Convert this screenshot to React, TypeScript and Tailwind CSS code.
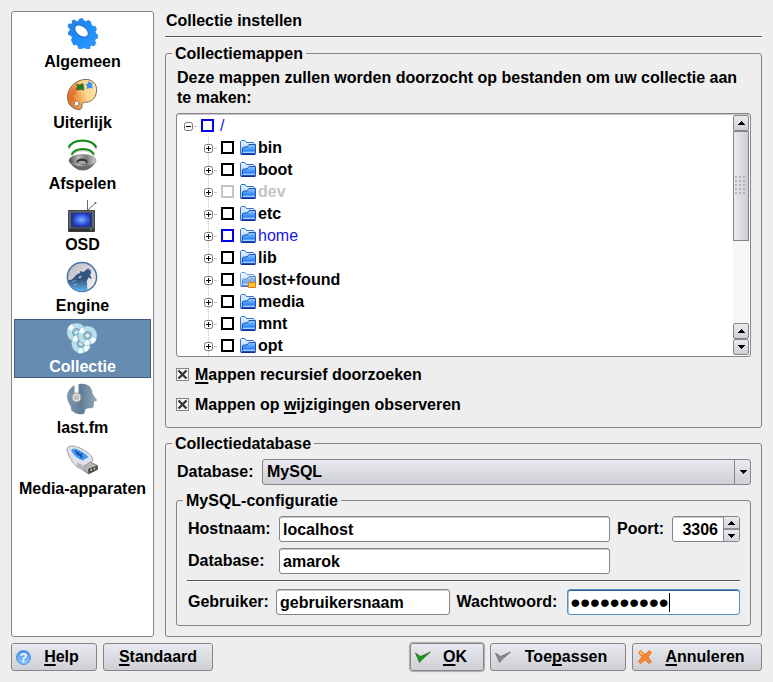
import type { ReactNode } from "react";

function GearIcon() {
  return (
    <svg viewBox="0 0 32 32" className="size-8" aria-hidden="true">
      <defs>
        <linearGradient id="gear" x1="0" y1="0" x2="1" y2="1">
          <stop offset="0" stopColor="#2a7be0" />
          <stop offset=".4" stopColor="#1b8bfb" />
          <stop offset="1" stopColor="#2f9dff" />
        </linearGradient>
      </defs>
      <path
        fill="url(#gear)"
        stroke="#2a7fdc"
        strokeWidth=".7"
        strokeLinejoin="round"
        d="M6 3.500 8.500 3l2 1.500 2-.3L13.500 2l3-.5 1.300 2.200 2.200 1 2-1.400 2.700 1.500.3 2.700 1.800 1.700 2.500.2 1.200 3-1.300 2 .5 2.200 2 1.300-.2 3.300-2.300.8-.4 2 1.200 2.200-2 2.700-2.500-.7-1.500 1 0 2.300-3 1-1.900-1.700-2.200 0-1.500 1.500-3-1-.4-2.500-1.800-1.300-2.500.6L5.300 23l1-2.200-1-2.200L2.700 18l-.5-3L4 13.700l.1-2L2 10l.8-3 2.700 0 1-1.200z"
      />
      <ellipse cx="15.500" cy="14" rx="7.800" ry="5" transform="rotate(38 15.500 14)" fill="#fff" stroke="#1f6fc8" strokeWidth="1.200" />
    </svg>
  );
}

function PaletteIcon() {
  return (
    <svg viewBox="0 0 32 32" className="size-8" aria-hidden="true">
      <defs>
        <linearGradient id="palette" x1="0" y1=".6" x2="1" y2=".3">
          <stop offset="0" stopColor="#e5702a" />
          <stop offset=".35" stopColor="#f3a352" />
          <stop offset=".6" stopColor="#fbd58a" />
          <stop offset="1" stopColor="#fde7a8" />
        </linearGradient>
      </defs>
      <path
        fill="url(#palette)"
        stroke="#7a6250"
        d="M19 1.500c6-.5 11 3 11.500 9 .4 6-2 11-7 13-3.500 1.300-7 .5-7.500 2.500-.3 1.500.5 4.500-2 5.300-2.500.7-7-.6-10-4.300C.8 23 .8 16 4 10.500 7.500 5 12.500 2 19 1.500z"
      />
      <path fill="#e2682a" opacity=".6" d="M3 21c-.5-5 2-11 7-13l2 3-2 3 1 2-4 2 2 3-4 4z" />
      <ellipse cx="10.500" cy="25.500" rx="2.200" ry="2.700" fill="#fff" stroke="#7a6250" strokeWidth=".8" transform="rotate(25 10.500 25.500)" />
      <path fill="#168018" stroke="#44543a" strokeWidth=".6" d="m10.500 6 3 1L17 5.500l.5 3 .5 3.500-3-.5-4.500.5 1-3z" />
      <path fill="#3f8ff5" d="m19.500 6 2 0L22.500 3l2 1.500 2 .5-.5 3 1 2.500-3-.5-3.500 1 .5-3z" />
    </svg>
  );
}

function SpeakerIcon() {
  return (
    <svg viewBox="0 0 32 32" className="size-8" aria-hidden="true">
      <defs>
        <linearGradient id="cone">
          <stop offset="0" stopColor="#4a4a4a" />
          <stop offset=".35" stopColor="#bbb" />
          <stop offset=".65" stopColor="#777" />
          <stop offset="1" stopColor="#d5d5d5" />
        </linearGradient>
      </defs>
      <path d="M2.500 10.500C7-1 26-1 30.500 10.500" fill="none" stroke="#c4c4c4" strokeWidth="1.500" />
      <path d="M2.500 8.500C7-1 26-1 30.500 8.500" fill="none" stroke="#138c16" strokeWidth="2" />
      <path d="M5.500 17c4-7.500 19-7.500 22.500 0" fill="none" stroke="#c4c4c4" strokeWidth="1.500" />
      <path d="M5.500 15.500c4-7.500 19-7.500 22.500 0" fill="none" stroke="#138c16" strokeWidth="2" />
      <path d="M3.500 22c1 4 4.500 6 6.500 7.500 2.500 2.500 11 2.500 13.500 0 2-1.500 5-3.500 6-7.500z" fill="#666" />
      <ellipse cx="16.500" cy="21.500" rx="13.500" ry="6" fill="url(#cone)" stroke="#777" strokeWidth=".6" />
      <ellipse cx="16" cy="22.500" rx="5.500" ry="3" fill="#333" />
      <ellipse cx="16" cy="23.500" rx="4" ry="1.800" fill="#a5a5a5" />
    </svg>
  );
}

function TvIcon() {
  return (
    <svg viewBox="0 0 32 32" className="size-8" aria-hidden="true">
      <defs>
        <radialGradient id="screen">
          <stop offset="0" stopColor="#86aeff" />
          <stop offset=".6" stopColor="#3a63e4" />
          <stop offset="1" stopColor="#2138ac" />
        </radialGradient>
      </defs>
      <path d="M21.500 10V0M22 10l7.500-7" stroke="#666" fill="none" />
      <circle cx="29.500" cy="3" r="1" fill="#666" />
      <path d="M2.500 10.500h26v21h-26z" fill="#666663" stroke="#444" />
      <path d="M3 28.500h25v3H3z" fill="#303030" />
      <path d="M5 12.500h21v15H5z" fill="#25307a" />
      <path d="M6 13h19l-1 7 1 6.500H6l1-6.500z" fill="url(#screen)" />
      <path d="M24 29.500h2" stroke="#21b038" strokeWidth="1.500" />
    </svg>
  );
}

function WolfIcon() {
  return (
    <svg viewBox="0 0 32 32" className="size-8" aria-hidden="true">
      <defs>
        <linearGradient id="sky" x1="0" y1="0" x2="1" y2="1">
          <stop offset="0" stopColor="#b6b6bf" />
          <stop offset="1" stopColor="#f8f8fa" />
        </linearGradient>
        <linearGradient id="wolf" x1="0" y1="0" x2="0" y2="1">
          <stop offset=".5" stopColor="#34557f" />
          <stop offset="1" stopColor="#60b4f0" />
        </linearGradient>
      </defs>
      <circle cx="16" cy="16" r="14.600" fill="url(#sky)" stroke="#4a72a4" strokeWidth="1.500" />
      <path
        fill="url(#wolf)"
        d="M2 19.500c3-.5 4-1 5.500-2.500 2-2.500 3.500-4.500 6.500-5l.5-2 3 1L22.500 7l.5 2.500L24.500 8l.5 4-1 2 2 4-3.500-1.500-1.500 3c-1 2 1 3 0 5l.5 4.500A14 14 0 0 1 2 19.500z"
      />
      <path d="m12.500 16 3-1-1.500 2.500z" fill="#fff" />
      <path d="m6 21 4-2M8 24l3-1" stroke="#9fc0e0" strokeWidth=".7" />
    </svg>
  );
}

function Disc({ cx, cy }: { cx: number; cy: number }) {
  return (
    <g>
      <circle cx={cx} cy={cy} r="9.800" fill="#b8dfec" stroke="#69909e" strokeWidth=".7" />
      <path d={`M${cx} ${cy}l-9-3.500a9.700 9.700 0 0 1 4-5zM${cx} ${cy}l9 3.500a9.700 9.700 0 0 1-4 5zM${cx} ${cy}l2 9.400a9.700 9.700 0 0 1-5 0z`} fill="#f4fdff" />
      <circle cx={cx} cy={cy} r="4" fill="#96c0cf" stroke="#6891a1" strokeWidth=".8" />
      <circle cx={cx} cy={cy} r="1.800" fill="#dff3fa" />
    </g>
  );
}

function DiscsIcon() {
  return (
    <svg viewBox="0 0 32 32" className="size-8" aria-hidden="true">
      <Disc cx={10.500} cy={10.500} />
      <Disc cx={15} cy={21.500} />
      <Disc cx={21.500} cy={13.500} />
    </svg>
  );
}

function HeadIcon() {
  return (
    <svg viewBox="0 0 32 32" className="size-8" aria-hidden="true">
      <defs>
        <linearGradient id="head">
          <stop offset="0" stopColor="#8399ad" />
          <stop offset=".45" stopColor="#5f7d97" />
          <stop offset="1" stopColor="#94a8b8" />
        </linearGradient>
      </defs>
      <path fill="url(#head)" d="M13 1c8-1.500 13 2.500 13.500 9 0 2 4.500 6 4.500 7.200 0 1-3 .8-3 1.800 0 3 0 5.500-2 6-2.500.5-5-.5-6.500 1.500-.7 1-.5 3-1.500 4.500-5 1-9.500-.5-13-4 1-4-3.500-7-4-13C1.200 7 6 2.200 13 1z" />
      <path d="M10.500 1v12" stroke="#fff" strokeWidth="4" />
      <circle cx="10.500" cy="14.500" r="4.500" fill="#e4e4e4" stroke="#9a9a9a" strokeWidth="1.200" />
      <circle cx="10.500" cy="14.500" r="2.300" fill="#c4c4c4" stroke="#aaa" strokeWidth=".7" />
    </svg>
  );
}

function UsbIcon() {
  return (
    <svg viewBox="0 0 32 32" className="size-8" aria-hidden="true">
      <path d="m17 20 5-3 9.500 4.500v4L22.500 30 17 26z" fill="#b5b5ad" stroke="#5e5e5e" strokeWidth=".7" />
      <path d="m22 25 9.500-3.500v4L22.500 30z" fill="#4a4a47" />
      <path d="m24.500 25.500 1.500-.7v1.500l-1.500.7zM27.700 24.200l1.500-.7V25l-1.500.7z" fill="#eee" />
      <path d="M1 5c.5-3 5-3.500 8.500-2.500 6 1.500 12 5.500 16 9.500l1.500 4.500-9 5.500v4.500L11 23C6 18 2 12 1 5z" fill="#e2e2ea" stroke="#8a8a95" strokeWidth=".8" />
      <path d="m11 18.500 7 3v5L11 23z" fill="#b8b8c2" />
      <path d="M5 6c2-2 5-1.500 8.500.5 4 2 7.500 4.500 9 6.500L17 16.500C12 15 7 11 5 6z" fill="#3f9bf8" />
      <path d="m9 6.500 7.500 7M10 9.500l6.500 1M13 7.500l-1 4.500M16 9.500l-1.500 4.500" stroke="#164a9c" strokeWidth="1.100" />
    </svg>
  );
}

function FolderIcon({ locked = false }: { locked?: boolean }) {
  return (
    <svg viewBox="0 0 16 16" className="size-4 shrink-0" aria-hidden="true">
      <defs>
        <linearGradient id="folderBack" x1="0" y1="0" x2="0" y2="1">
          <stop offset="0" stopColor="#e8f4ff" />
          <stop offset="1" stopColor="#9fcaf8" />
        </linearGradient>
        <linearGradient id="folderFront" x1="0" y1="0" x2="0" y2="1">
          <stop offset="0" stopColor="#9ccdff" />
          <stop offset=".35" stopColor="#5aa6fb" />
          <stop offset=".7" stopColor="#2f83f5" />
          <stop offset="1" stopColor="#e2f4ff" />
        </linearGradient>
      </defs>
      <g opacity={locked ? 0.7 : 1}>
        <path d="M.5 14V1.500l1-1H5l1.500 2h7l1 1V14z" fill="url(#folderBack)" stroke="#2f6fd6" />
        <path d="M2.500 13.500V8l1-1H7l2-2.500h6.500v9z" fill="url(#folderFront)" stroke="#1c50b8" />
        <path d="M1 14.500h14.500" stroke="#0f2f92" />
      </g>
      {locked && (
        <g>
          <path d="M10 11V8.500a2 2 0 0 1 4 0V11" fill="none" stroke="#999" strokeWidth="1.200" />
          <path d="M8.500 10.500h7v5h-7z" fill="#fbc23c" stroke="#e07b14" />
        </g>
      )}
    </svg>
  );
}

function Expander({ open = false }: { open?: boolean }) {
  return (
    <svg viewBox="0 0 9 9" className="size-[9px]" aria-hidden="true">
      <rect x=".5" y=".5" width="8" height="8" rx="2" fill="#fff" stroke="#777" />
      <path d={open ? "M2 4.500h5" : "M2 4.500h5M4.500 2v5"} stroke="#000" />
    </svg>
  );
}

function Arrow({ down = false }: { down?: boolean }) {
  return (
    <svg viewBox="0 0 7 4" className="h-1 w-[7px]" shapeRendering="crispEdges" aria-hidden="true">
      <path d={down ? "M0 0h7v1H6v1H5v1H4v1H3V3H2V2H1V1H0z" : "M0 4h7V3H6V2H5V1H4V0H3v1H2v1H1v1H0z"} />
    </svg>
  );
}

function TickIcon({ gray = false }: { gray?: boolean }) {
  return (
    <svg viewBox="0 0 16 16" className="size-4" aria-hidden="true">
      <path d="M.5 4 5.500 7.500 15.500 3 7 10.500 4.500 13.500z" fill={gray ? "#8a8a8a" : "#0f9a17"} stroke={gray ? "#6c6c6c" : "#3c6b34"} strokeWidth=".8" />
    </svg>
  );
}

function CrossIcon() {
  return (
    <svg viewBox="0 0 16 16" className="size-4" aria-hidden="true">
      <path
        d="m3.500 1.500 4.500 4 4.500-4 2 2L11 8l3.500 4.500-2.500 2L8 11l-4.500 3.500-2-2L5 8 1.500 3.500z"
        fill="#f58634"
        stroke="#dd6a1c"
        strokeWidth=".8"
      />
      <path d="m3.500 2.500 3 3-2 .5-2-2.500z" fill="#ffd24f" />
    </svg>
  );
}

function HelpIcon() {
  return (
    <span className="flex size-[15px] items-center justify-center rounded-full border border-[#4a8ae0] bg-linear-to-b from-[#4a90ee] to-[#8accff] text-[13px] leading-none text-white" aria-hidden="true">
      ?
    </span>
  );
}

const pages = [
  { name: "Algemeen", icon: <GearIcon /> },
  { name: "Uiterlijk", icon: <PaletteIcon /> },
  { name: "Afspelen", icon: <SpeakerIcon /> },
  { name: "OSD", icon: <TvIcon /> },
  { name: "Engine", icon: <WolfIcon /> },
  { name: "Collectie", icon: <DiscsIcon />, active: true },
  { name: "last.fm", icon: <HeadIcon /> },
  { name: "Media-apparaten", icon: <UsbIcon /> },
];

const folders: { name: string; tone?: "gray" | "blue"; locked?: boolean }[] = [
  { name: "bin" },
  { name: "boot" },
  { name: "dev", tone: "gray" },
  { name: "etc" },
  { name: "home", tone: "blue" },
  { name: "lib" },
  { name: "lost+found", locked: true },
  { name: "media" },
  { name: "mnt" },
  { name: "opt" },
];

const boxTone = { black: "border-black", gray: "border-[#c4c4c4]", blue: "border-[#0000f0]" };
const textTone = { black: "text-black", gray: "text-[#c4c4c4]", blue: "font-normal text-[#1414e6]" };

function TreeRow({ name, tone = "black", locked, root }: { name: string; tone?: "black" | "gray" | "blue"; locked?: boolean; root?: boolean }) {
  return (
    <li className={root ? "flex h-[22px] items-center pb-px pl-[7px]" : "flex h-[22px] items-center bg-[repeating-linear-gradient(to_bottom,#c0c0c0_0_1px,transparent_1px_2px)] bg-[length:1px_100%] bg-[position:31px_0] bg-no-repeat pb-px pl-[27px]"}>
      <button type="button" aria-label={"Map " + name + " uitklappen"} className="mt-[2px] flex">
        <Expander open={root} />
      </button>
      <span className="mt-[2px] mr-[5px] ml-px w-[2px] border-t border-dotted border-[#c0c0c0]" />
      <label className="flex items-center">
        <input type="checkbox" disabled={tone === "gray"} className={"size-[13px] appearance-none border-2 bg-white " + boxTone[tone]} />
        {root ? <span className="w-[6px]" /> : <span className="mr-[2px] ml-[6px] flex"><FolderIcon locked={locked} /></span>}
        <span className={"pt-px " + textTone[tone]}>{name}</span>
      </label>
    </li>
  );
}

const face = "border border-[#858585] bg-linear-to-b from-[#e9e9f0] to-[#cfcfd6]";

function ScrollButton({ down, label }: { down?: boolean; label: string }) {
  return (
    <button type="button" aria-label={label} className={"flex h-4 w-full shrink-0 items-center justify-center rounded-[2px] " + face}>
      <Arrow down={down} />
    </button>
  );
}

function ScrollBar() {
  return (
    <div className="mt-px mr-px mb-px flex w-4 shrink-0 flex-col bg-[repeating-conic-gradient(#eeeeee_0_25%,#ffffff_0_50%)] bg-[length:2px_2px]">
      <ScrollButton label="Omhoog" />
      <div className="flex h-[110px] items-center justify-center border border-[#858585] bg-linear-to-r from-[#e9e9f0] to-[#cdcdd4]">
        <div className="h-5 w-3 bg-[radial-gradient(circle_at_1px_1px,#b4b4b4_0_1px,transparent_1px)] bg-[length:4px_4px]" />
      </div>
      <div className="flex-1" />
      <ScrollButton label="Omhoog" />
      <ScrollButton down label="Omlaag" />
    </div>
  );
}

function CheckOption({ children }: { children: ReactNode }) {
  return (
    <label className="flex h-5 items-center">
      <span className="relative mr-[6px] flex size-[13px]">
        <input type="checkbox" defaultChecked className="size-[13px] appearance-none border border-[#858585] bg-[#f4f4f4]" />
        <svg viewBox="0 0 13 13" className="pointer-events-none absolute inset-0 size-[13px]" aria-hidden="true">
          <path d="m2.500 2.500 8 8M10.500 2.500l-8 8" stroke="#333" strokeWidth="2.300" />
        </svg>
      </span>
      <span className="pt-[2px]">{children}</span>
    </label>
  );
}

function Group({ title, children, className = "" }: { title: string; children: ReactNode; className?: string }) {
  return (
    <fieldset className={"min-w-0 rounded-[3px] border border-[#858585] px-[10px] " + className}>
      <legend className="-ml-1 h-[18px] px-[3px] pt-px">{title}</legend>
      {children}
    </fieldset>
  );
}

function DialogButton({ icon, children, className, strong }: { icon?: ReactNode; children: ReactNode; className: string; strong?: boolean }) {
  return (
    <button
      type="button"
      className={"flex h-7 items-center rounded-[3px] px-1 " + face + (strong ? " shadow-[0_0_1px_1px_#aaaaaa] " : " ") + className}
    >
      {icon}
      <span className="flex-1 text-center">{children}</span>
    </button>
  );
}

const field = "h-[26px] min-w-0 rounded-[3px] border border-[#858585] bg-white px-[3px] pt-[2px] shadow-[inset_0_1px_0_#c8c8c8] outline-none";
const key = "underline decoration-2 underline-offset-2 [text-decoration-skip-ink:none]";

export default function App() {
  return (
    <div className="min-h-screen bg-[#eeeeee] p-[11px] font-['Liberation_Sans',Arial,sans-serif] text-[16px] leading-[18px] font-bold text-black">
      <div className="flex gap-[11px]">
        <nav className="w-[143px] shrink-0 rounded-[3px] border border-[#858585] bg-white p-[2px]">
          <ul className="flex flex-col gap-[2px]">
            {pages.map((p) => (
              <li key={p.name}>
                <button
                  type="button"
                  className={"flex h-[59px] w-full flex-col items-center gap-1 border pt-[2px] whitespace-nowrap " + (p.active ? "border-[#3f5c80] bg-[#678cb1] text-white" : "border-transparent")}
                >
                  <span className="mr-[2px]">{p.icon}</span>
                  <span>{p.name}</span>
                </button>
              </li>
            ))}
          </ul>
        </nav>

        <main className="min-w-0 flex-1">
          <h1 className="border-b border-[#555555] pt-px pb-[6px] pl-px shadow-[0_1px_0_#ffffff]">Collectie instellen</h1>

          <Group title="Collectiemappen" className="mt-[7px] pb-[13px]">
            <p className="mt-[6px] pl-px leading-5">Deze mappen zullen worden doorzocht op bestanden om uw collectie aan te maken:</p>
            <div className="mt-[5px] flex h-[244px] overflow-hidden rounded-[3px] border border-[#858585] bg-white shadow-[inset_0_1px_0_#c8c8c8]">
              <ul className="flex-1 pt-px">
                <TreeRow name="/" tone="blue" root />
                {folders.map((f) => (
                  <TreeRow key={f.name} {...f} />
                ))}
              </ul>
              <ScrollBar />
            </div>
            <div className="mt-[7px] flex flex-col gap-[10px]">
              <CheckOption>
                <span className={key}>M</span>appen recursief doorzoeken
              </CheckOption>
              <CheckOption>
                Mappen op <span className={key}>w</span>ijzigingen observeren
              </CheckOption>
            </div>
          </Group>

          <Group title="Collectiedatabase" className="mt-[6px] pb-[10px]">
            <div className="mt-[7px] flex items-center">
              <label htmlFor="engine" className="w-[86px] pl-px">Database:</label>
              <div className="relative flex-1">
                <select id="engine" className={"block h-[26px] w-full appearance-none rounded-[3px] pl-1 outline-none " + face}>
                  <option>MySQL</option>
                </select>
                <span className="pointer-events-none absolute inset-y-0 right-0 flex w-[17px] items-center justify-center border-l border-[#858585]">
                  <Arrow down />
                </span>
              </div>
            </div>

            <Group title="MySQL-configuratie" className="mt-[6px] pb-[10px]">
              <div className="mt-[7px] flex items-center">
                <label htmlFor="host" className="w-[92px] pl-px">Hostnaam:</label>
                <input id="host" defaultValue="localhost" className={"flex-1 " + field} />
                <label htmlFor="port" className="w-[62px] pl-[7px]">Poort:</label>
                <div className="flex h-[26px] w-[68px] overflow-hidden rounded-[3px] border border-[#858585] bg-white">
                  <input id="port" defaultValue="3306" className="w-[50px] pt-[2px] pr-[5px] text-right shadow-[inset_0_1px_0_#c8c8c8] outline-none" />
                  <span className="flex flex-1 flex-col border-l border-[#858585]">
                    <button type="button" aria-label="Hoger" className="flex flex-1 items-center justify-center bg-linear-to-b from-[#e9e9f0] to-[#d4d4da]">
                      <Arrow />
                    </button>
                    <button type="button" aria-label="Lager" className="flex flex-1 items-center justify-center border-t-2 border-[#8f8f8f] bg-linear-to-b from-[#e9e9f0] to-[#d4d4da]">
                      <Arrow down />
                    </button>
                  </span>
                </div>
              </div>
              <div className="mt-[6px] flex items-center pr-[130px]">
                <label htmlFor="db" className="w-[92px] pl-px">Database:</label>
                <input id="db" defaultValue="amarok" className={"flex-1 " + field} />
              </div>
              <hr className="mt-[6px] mb-2 border-[#555555] shadow-[0_1px_0_#ffffff]" />
              <div className="flex items-center">
                <label htmlFor="user" className="w-[89px] pl-px">Gebruiker:</label>
                <input id="user" defaultValue="gebruikersnaam" className={"flex-1 " + field} />
                <label htmlFor="pass" className="w-[117px] pl-[7px]">Wachtwoord:</label>
                <div className="flex h-[26px] flex-1 items-center rounded-[3px] border border-[#5b8fc4] bg-white px-[3px] shadow-[inset_0_1px_0_#35618f,inset_1px_0_0_#a0c4e8]">
                  <input
                    id="pass"
                    type="password"
                    defaultValue="collection"
                    className="field-sizing-content h-6 pt-[2px] text-[28px] leading-5 font-normal outline-none"
                  />
                  <span className="h-[19px] w-px bg-black" />
                </div>
              </div>
            </Group>
          </Group>
        </main>
      </div>

      <footer className="mt-[6px] flex gap-[6px]">
        <DialogButton icon={<HelpIcon />} className="w-[86px]"><span className={key}>H</span>elp</DialogButton>
        <DialogButton className="w-[110px]"><span className={key}>S</span>tandaard</DialogButton>
        <DialogButton strong icon={<TickIcon />} className="ml-auto w-[74px]"><span className={key}>O</span>K</DialogButton>
        <DialogButton icon={<TickIcon gray />} className="w-[136px]">Toe<span className={key}>p</span>assen</DialogButton>
        <DialogButton icon={<CrossIcon />} className="w-[130px]"><span className={key}>A</span>nnuleren</DialogButton>
      </footer>
    </div>
  );
}
